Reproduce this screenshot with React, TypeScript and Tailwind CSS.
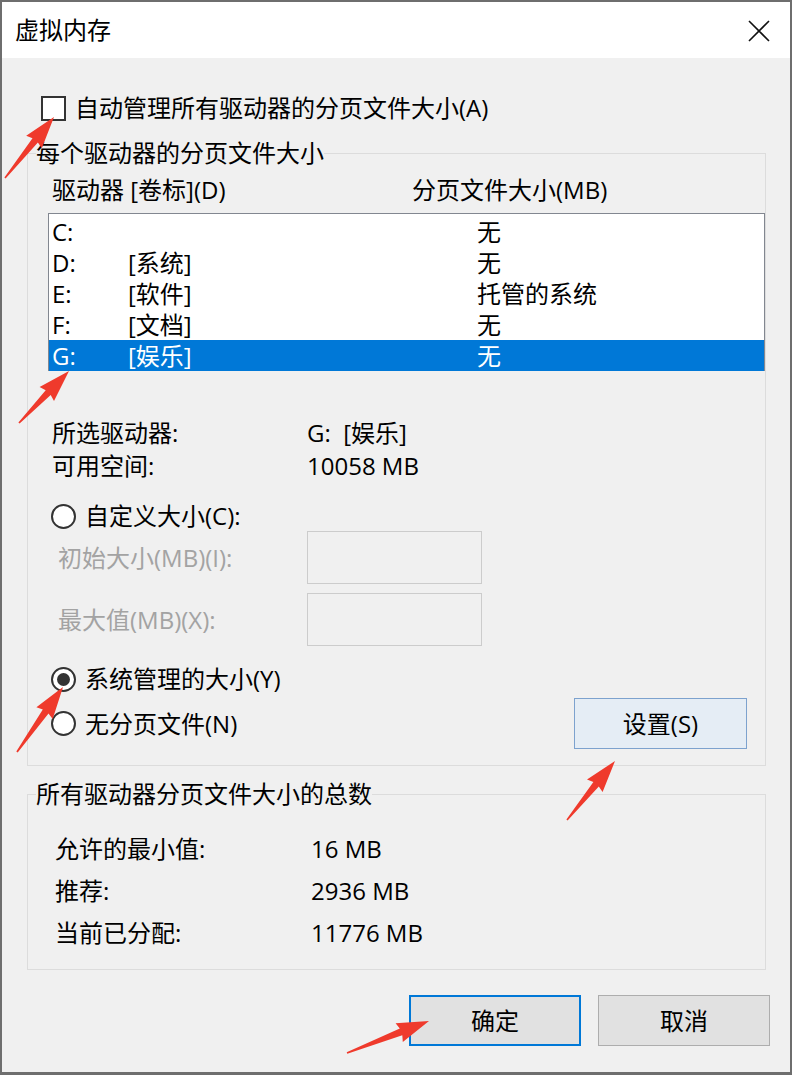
import React from "react";

const FONT = '"Open Sans", "Noto Sans CJK SC", sans-serif';

type Drive = { letter: string; label: string; size: string; selected?: boolean };

const drives: Drive[] = [
  { letter: "C:", label: "", size: "无" },
  { letter: "D:", label: "[系统]", size: "无" },
  { letter: "E:", label: "[软件]", size: "托管的系统" },
  { letter: "F:", label: "[文档]", size: "无" },
  { letter: "G:", label: "[娱乐]", size: "无", selected: true },
];

// red annotation arrows: [tailX, tailY, tipX, tipY]
const arrows: [number, number, number, number][] = [
  [5, 178, 54, 117],
  [19, 423, 69, 371],
  [17, 752, 63, 687],
  [567, 820, 615, 761],
  [347, 1053, 429, 1021],
];

function arrowPoints(x1: number, y1: number, x2: number, y2: number) {
  const dx = x2 - x1;
  const dy = y2 - y1;
  const len = Math.hypot(dx, dy);
  const ux = dx / len;
  const uy = dy / len;
  const nx = -uy;
  const ny = ux;
  const head = 30;
  const bx = x2 - ux * head;
  const by = y2 - uy * head;
  const p = (x: number, y: number) => `${x.toFixed(1)},${y.toFixed(1)}`;
  return [
    p(x1 + nx * 0.8, y1 + ny * 0.8),
    p(bx + nx * 3.5, by + ny * 3.5),
    p(bx + nx * 10 - ux * 2, by + ny * 10 - uy * 2),
    p(x2, y2),
    p(bx - nx * 10 - ux * 2, by - ny * 10 - uy * 2),
    p(bx - nx * 3.5, by - ny * 3.5),
    p(x1 - nx * 0.8, y1 - ny * 0.8),
  ].join(" ");
}

function Radio({ checked }: { checked?: boolean }) {
  return (
    <span className="flex h-[25px] w-[25px] shrink-0 items-center justify-center rounded-full border-2 border-[#333333] bg-white">
      {checked && <span className="h-[13px] w-[13px] rounded-full bg-[#333333]" />}
    </span>
  );
}

export default function App() {
  return (
    <div
      className="relative flex h-[1075px] w-[792px] flex-col overflow-hidden border-x-[2px] border-t-[2px] border-b-[3px] border-[#6e6e6e] bg-[#f0f0f0] text-[24px] text-black"
      style={{ fontFamily: FONT }}
    >
      {/* title bar */}
      <div className="flex h-[56px] shrink-0 items-center justify-between bg-white pl-[13px] pr-[20px]">
        <span className="leading-[30px]">虚拟内存</span>
        <svg width="22" height="22" viewBox="0 0 22 22" className="mt-[2px]">
          <path d="M1 1 L21 21 M21 1 L1 21" stroke="#111" strokeWidth="1.6" />
        </svg>
      </div>

      {/* auto manage checkbox */}
      <div className="mt-[35px] flex h-[30px] items-center pl-[39px]">
        <span className="h-[25px] w-[25px] border-2 border-[#333333] bg-white" />
        <span className="ml-[9px] leading-[30px]">自动管理所有驱动器的分页文件大小(A)</span>
      </div>

      {/* per-drive group */}
      <fieldset className="ml-[25px] mt-[15px] w-[739px] border border-[#dcdcdc] pb-[16px] pl-[20px] pr-0">
        <legend className="ml-[-12px] p-0 leading-[30px]">每个驱动器的分页文件大小</legend>

        <div className="mt-[7px] flex h-[30px] items-center pl-[4px] leading-[30px]">
          <span className="w-[360px]">驱动器 [卷标](D)</span>
          <span>分页文件大小(MB)</span>
        </div>

        <div className="mt-[8px] h-[158px] border border-[#828790] bg-white pt-[2px]">
          {drives.map((d) => (
            <div
              key={d.letter}
              className={
                "flex h-[31px] items-center pl-[3px] leading-[31px] " +
                (d.selected ? "bg-[#0078d7] text-white" : "")
              }
            >
              <span className="w-[76px]">{d.letter}</span>
              <span className="w-[349px]">{d.label}</span>
              <span>{d.size}</span>
            </div>
          ))}
        </div>

        <div className="mt-[45px] flex h-[33px] items-center pl-[4px]">
          <span className="w-[255px]">所选驱动器:</span>
          <span>G:&nbsp; [娱乐]</span>
        </div>
        <div className="flex h-[33px] items-center pl-[4px]">
          <span className="w-[255px]">可用空间:</span>
          <span>10058 MB</span>
        </div>

        <div className="mt-[19px] flex h-[30px] items-center pl-[3px]">
          <Radio />
          <span className="ml-[9px]">自定义大小(C):</span>
        </div>
        <div className="flex h-[53px] items-center pl-[10px] text-[#a3a3a3]">
          <span className="w-[249px]">初始大小(MB)(I):</span>
          <span className="h-[53px] w-[175px] border border-[#cccccc] bg-[#f0f0f0]" />
        </div>
        <div className="mt-[9px] flex h-[53px] items-center pl-[10px] text-[#a3a3a3]">
          <span className="w-[249px]">最大值(MB)(X):</span>
          <span className="h-[53px] w-[175px] border border-[#cccccc] bg-[#f0f0f0]" />
        </div>

        <div className="mt-[18px] flex h-[30px] items-center pl-[3px]">
          <Radio checked />
          <span className="ml-[9px]">系统管理的大小(Y)</span>
        </div>
        <div className="mt-[4px] flex h-[51px] items-center justify-between pl-[3px] pr-[18px]">
          <div className="flex items-center">
            <Radio />
            <span className="ml-[9px]">无分页文件(N)</span>
          </div>
          <button className="h-[51px] w-[173px] border border-[#7da2ce] bg-[#e5edf5]">设置(S)</button>
        </div>
      </fieldset>

      {/* totals group */}
      <fieldset className="ml-[25px] mt-[13px] w-[739px] border border-[#dcdcdc] pb-[15px] pl-[27px]">
        <legend className="ml-[-19px] p-0 leading-[30px]">所有驱动器分页文件大小的总数</legend>
        <div className="mt-[19px] flex h-[42px] items-center">
          <span className="w-[256px]">允许的最小值:</span>
          <span>16 MB</span>
        </div>
        <div className="flex h-[42px] items-center">
          <span className="w-[256px]">推荐:</span>
          <span>2936 MB</span>
        </div>
        <div className="flex h-[42px] items-center">
          <span className="w-[256px]">当前已分配:</span>
          <span>11776 MB</span>
        </div>
      </fieldset>

      {/* dialog buttons */}
      <div className="mt-[25px] flex justify-end gap-[17px] pr-[20px]">
        <button className="h-[51px] w-[172px] border-2 border-[#0078d7] bg-[#e1e1e1]">确定</button>
        <button className="h-[51px] w-[172px] border border-[#adadad] bg-[#e1e1e1]">取消</button>
      </div>

      {/* annotation arrows */}
      <svg className="pointer-events-none absolute left-[-2px] top-[-2px]" width="792" height="1075">
        {arrows.map(([a, b, c, d], i) => (
          <polygon key={i} points={arrowPoints(a, b, c, d)} fill="#ef3a2c" />
        ))}
      </svg>
    </div>
  );
}
